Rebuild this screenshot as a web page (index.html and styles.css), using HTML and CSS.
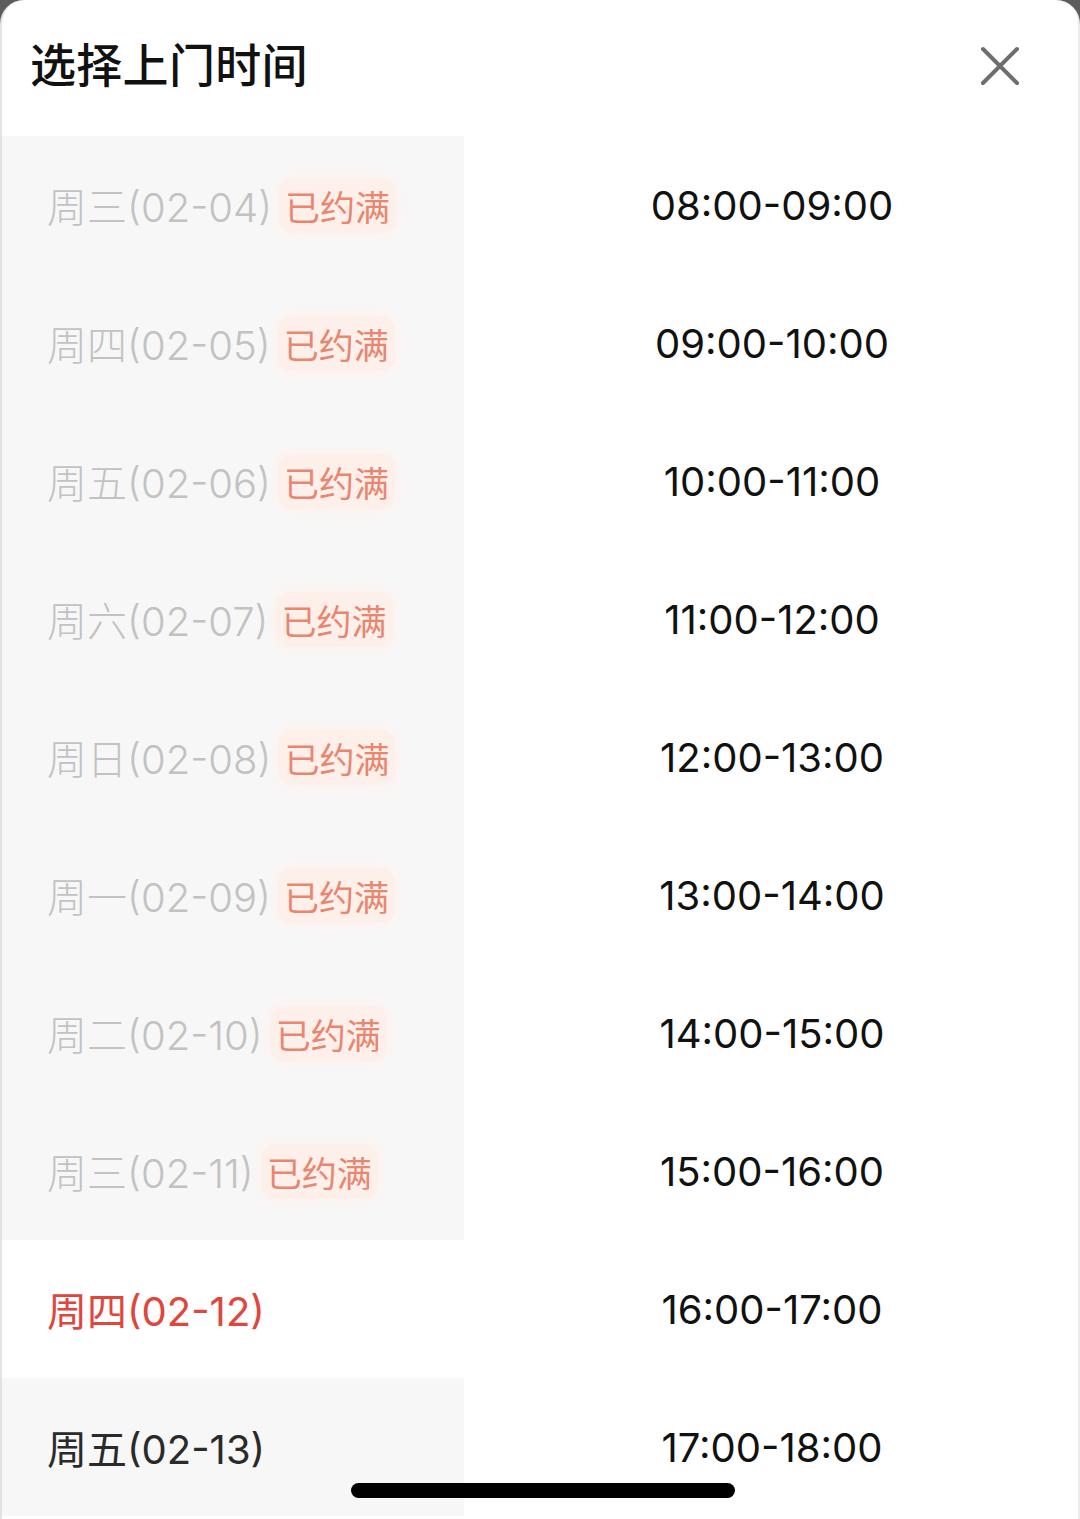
FILE: index.html
```html
<!DOCTYPE html>
<html lang="zh-CN">
<head>
<meta charset="utf-8">
<link rel="stylesheet" href="styles.css">
</head>
<body>
<div class="sheet">
  <header class="header">
    <h1 class="title">选择上门时间</h1>
    <svg class="close" viewBox="0 0 40 40" width="40" height="40"><path d="M3 3 L37 37 M37 3 L3 37" stroke="#6e6e6e" stroke-width="4" stroke-linecap="round" fill="none"/></svg>
  </header>
  <div class="body">
    <ul class="days">
      <li class="day"><span class="date">周三(02-04)</span><span class="full">已约满</span></li>
      <li class="day"><span class="date">周四(02-05)</span><span class="full">已约满</span></li>
      <li class="day"><span class="date">周五(02-06)</span><span class="full">已约满</span></li>
      <li class="day"><span class="date">周六(02-07)</span><span class="full">已约满</span></li>
      <li class="day"><span class="date">周日(02-08)</span><span class="full">已约满</span></li>
      <li class="day"><span class="date">周一(02-09)</span><span class="full">已约满</span></li>
      <li class="day"><span class="date">周二(02-10)</span><span class="full">已约满</span></li>
      <li class="day"><span class="date">周三(02-11)</span><span class="full">已约满</span></li>
      <li class="day selected"><span class="date">周四(02-12)</span></li>
      <li class="day open"><span class="date">周五(02-13)</span></li>
    </ul>
    <ul class="slots">
      <li class="slot">08:00-09:00</li>
      <li class="slot">09:00-10:00</li>
      <li class="slot">10:00-11:00</li>
      <li class="slot">11:00-12:00</li>
      <li class="slot">12:00-13:00</li>
      <li class="slot">13:00-14:00</li>
      <li class="slot">14:00-15:00</li>
      <li class="slot">15:00-16:00</li>
      <li class="slot">16:00-17:00</li>
      <li class="slot">17:00-18:00</li>
    </ul>
  </div>
  <div class="home-indicator"></div>
</div>
</body>
</html>
```

FILE: styles.css
```css
* { box-sizing: border-box; }
html, body {
  margin: 0;
  padding: 0;
  width: 1080px;
  height: 1519px;
  overflow: hidden;
  background: #5c5c5c;
}
body {
  font-family: Inter, "Noto Sans CJK SC", "Noto Sans", sans-serif;
}
.sheet {
  position: relative;
  width: 1080px;
  height: 1519px;
  background: #ffffff;
  border-radius: 24px 24px 0 0;
  border-left: 2px solid #e2e2e2;
  border-right: 2px solid #ececec;
  overflow: hidden;
}
.header {
  height: 136px;
  display: flex;
  align-items: center;
  justify-content: space-between;
  padding: 0 58px 12px 28px;
}
.title {
  margin: 0;
  font-family: "Noto Sans CJK SC", sans-serif;
  font-size: 46px;
  font-weight: 500;
  color: #111;
  letter-spacing: 0.3px;
}
.close {
  display: block;
  width: 40px;
  height: 40px;
  margin-top: 8px;
}
.body {
  display: flex;
}
.days, .slots {
  list-style: none;
  margin: 0;
  padding: 0;
}
.days {
  width: 462px;
  background: #f7f7f7;
}
.day {
  height: 138px;
  display: flex;
  align-items: center;
  padding-left: 45px;
  font-size: 40px;
  font-weight: 300;
}
.date {
  color: #c2c2c2;
}
.full {
  margin-left: 7px;
  padding: 2px 6px;
  color: #e98670;
  background: #fdf0eb;
  border-radius: 14px;
  box-shadow: 0 0 12px 4px #fdf3ef;
  font-family: "Noto Sans CJK SC", sans-serif;
  font-weight: 400;
  font-size: 35px;
}
.day.selected {
  background: #ffffff;
}
.day.selected .date {
  color: #e0463c;
  font-weight: 400;
}
.day.open .date {
  color: #2a2a2a;
  font-weight: 400;
}
.slots {
  flex: 1;
}
.slot {
  height: 138px;
  display: flex;
  align-items: center;
  justify-content: center;
  padding-left: 2px;
  font-size: 40px;
  color: #111;
}
.home-indicator {
  position: absolute;
  left: 349px;
  bottom: 21px;
  width: 384px;
  height: 15px;
  border-radius: 8px;
  background: #000;
}
```
